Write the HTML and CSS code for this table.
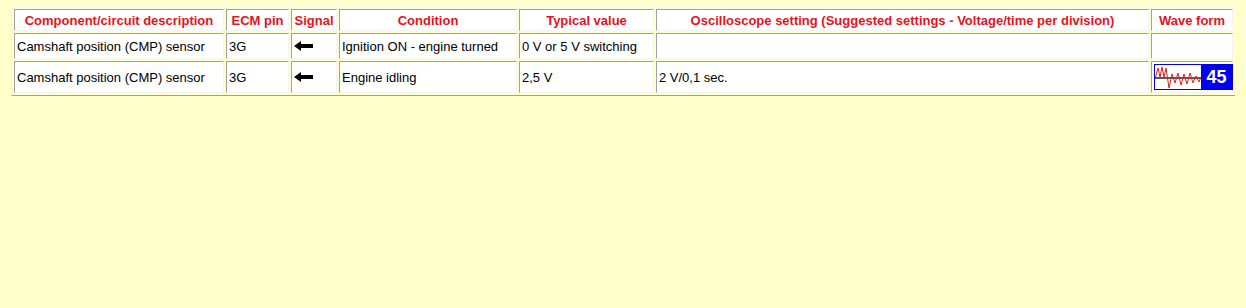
FILE: index.html
```html
<!DOCTYPE html>
<html lang="en">
<head>
    <meta charset="UTF-8">
    <title>ECM pin data</title>
    <link rel="stylesheet" href="styles.css">
</head>
<body>
    <table class="pins">
        <colgroup>
            <col class="c-desc">
            <col class="c-pin">
            <col class="c-signal">
            <col class="c-cond">
            <col class="c-value">
            <col class="c-scope">
            <col>
        </colgroup>
        <tr class="head">
            <th>Component/circuit description</th>
            <th>ECM pin</th>
            <th>Signal</th>
            <th>Condition</th>
            <th>Typical value</th>
            <th>Oscilloscope setting (Suggested settings - Voltage/time per division)</th>
            <th>Wave form</th>
        </tr>
        <tr class="row">
            <td>Camshaft position (CMP) sensor</td>
            <td>3G</td>
            <td class="sig">
                <!-- signal goes into the ECM -->
                <svg class="arrow" width="19" height="10" viewBox="0 0 19 10">
                    <polygon points="0,5 7,0 7,3 19,3 19,7 7,7 7,10" fill="#000"/>
                </svg>
            </td>
            <td>Ignition ON - engine turned</td>
            <td>0 V or 5 V switching</td>
            <td></td>
            <td></td>
        </tr>
        <tr class="row tall">
            <td>Camshaft position (CMP) sensor</td>
            <td>3G</td>
            <td class="sig">
                <svg class="arrow" width="19" height="10" viewBox="0 0 19 10">
                    <polygon points="0,5 7,0 7,3 19,3 19,7 7,7 7,10" fill="#000"/>
                </svg>
            </td>
            <td>Engine idling</td>
            <td>2,5 V</td>
            <td>2 V/0,1 sec.</td>
            <td class="wave">
                <a class="wave-link" href="#">
                    <svg class="trace" width="46" height="24" viewBox="0 0 46 24">
                        <line x1="0" y1="13" x2="46" y2="13" stroke="#222" stroke-width="1.5"/>
                        <polyline points="0,14 3,3 5,12 7,2 9,12 11,3 14,23 17,9 20,18 23,8 26,20 29,9 32,19 35,8 38,18 41,11 44,17 46,12" fill="none" stroke="#e02020" stroke-width="1"/>
                    </svg>
                    <span class="num">45</span>
                </a>
            </td>
        </tr>
    </table>
</body>
</html>
```

FILE: styles.css
```css
body {
    margin: 6px 11px;
    background-color: #ffffcc;
    font-family: "Liberation Sans", Arial, sans-serif;
    font-size: 13px;
}

.pins {
    width: 1225px;
    table-layout: fixed;
    border-collapse: separate;
    border-spacing: 2px;
    border: 1px solid;
    border-color: #f4f4f4 #a0a0a0 #a0a0a0 #f4f4f4;
}

.c-desc { width: 210px; }
.c-pin { width: 63px; }
.c-signal { width: 46px; }
.c-cond { width: 178px; }
.c-value { width: 135px; }
.c-scope { width: 493px; }

.pins th,
.pins td {
    box-sizing: border-box;
    background: #fff;
    border: 1px solid;
    border-color: #a0a0a0 #f4f4f4 #f4f4f4 #a0a0a0;
    padding: 0 2px;
    white-space: nowrap;
    vertical-align: middle;
}

.head th {
    height: 22px;
    color: #e3141c;
    font-weight: bold;
    text-align: center;
}

.row td {
    height: 26px;
    color: #000;
}

.row.tall td {
    height: 32px;
}

.sig {
    padding-left: 7px;
}

.arrow {
    display: block;
}

.wave {
    padding: 0;
}

.wave-link {
    display: flex;
    width: 77px;
    height: 24px;
    border: 1px solid #0000e0;
    text-decoration: none;
}

.trace {
    display: block;
    flex: none;
    background: #fff;
}

.num {
    flex: 1;
    background: #0000f0;
    color: #fff;
    font-weight: bold;
    font-size: 18px;
    line-height: 24px;
    text-align: center;
}
```
